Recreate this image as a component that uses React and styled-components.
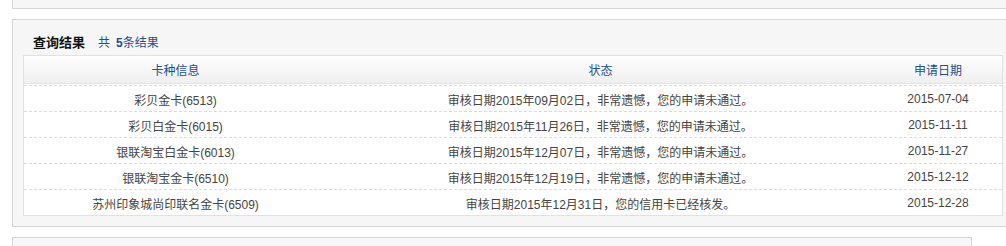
import React from "react";
import styled, { createGlobalStyle } from "styled-components";

const Global = createGlobalStyle`
  html, body { margin: 0; padding: 0; background: #fff; overflow: hidden; }
  body { font-family: "Liberation Sans", Arial, "Noto Sans CJK SC", sans-serif; font-size: 12px; color: #444; }
`;

const Page = styled.div`
  width: 1040px;
  padding-left: 12px;
  display: flex;
  flex-direction: column;
  gap: 10px;
`;

const TopPanel = styled.div`
  height: 8px;
  background: #f6f6f6;
  border-left: 1px solid #d6d6d6;
  border-bottom: 1px solid #d6d6d6;
`;

const Panel = styled.section`
  background: #f6f6f6;
  border: 1px solid #d6d6d6;
  border-right: none;
  padding: 0 0 10px 10px;
`;

const BottomPanel = styled.div`
  width: 958px;
  height: 12px;
  background: #f7f7f7;
  border: 1px solid #d6d6d6;
  border-bottom: none;
`;

const TitleBar = styled.div`
  padding: 13px 0 0 10px;
  margin-bottom: 2px;
  height: 20px;
  line-height: 20px;
  display: flex;
  align-items: center;
  gap: 13px;
`;

const Title = styled.h3`
  margin: 0;
  font-size: 13px;
  font-weight: bold;
  color: #111;
  font-family: "Liberation Sans", "Noto Sans CJK SC", sans-serif;
`;

const Count = styled.span`
  font-size: 12px;
  color: #1f4e8e;
  display: flex;
  gap: 6px;
`;

const Num = styled.b`
  font-weight: bold;
`;

const Table = styled.div`
  width: 978px;
  border: 1px solid #e2e2e2;
  background: #fff;
`;

const cols = "303px 1fr 128px";

const HeadRow = styled.div`
  display: grid;
  grid-template-columns: ${cols};
  height: 27px;
  background: linear-gradient(#ffffff, #efefef);
  border-bottom: 1px solid #e4e4e4;
  margin-bottom: 1px;
`;

const Th = styled.div`
  display: flex;
  align-items: center;
  justify-content: center;
  color: #1f4e8e;
  font-size: 12px;
`;

const Row = styled.div`
  display: grid;
  grid-template-columns: ${cols};
  height: 25px;
  border-top: 1px dashed #dcdcdc;
`;

const Td = styled.div`
  display: flex;
  align-items: center;
  justify-content: center;
  color: #444;
  font-size: 12px;
  white-space: nowrap;
  padding-top: 1px;
`;

const rows = [
  ["彩贝金卡(6513)", "审核日期2015年09月02日，非常遗憾，您的申请未通过。", "2015-07-04"],
  ["彩贝白金卡(6015)", "审核日期2015年11月26日，非常遗憾，您的申请未通过。", "2015-11-11"],
  ["银联淘宝白金卡(6013)", "审核日期2015年12月07日，非常遗憾，您的申请未通过。", "2015-11-27"],
  ["银联淘宝金卡(6510)", "审核日期2015年12月19日，非常遗憾，您的申请未通过。", "2015-12-12"],
  ["苏州印象城尚印联名金卡(6509)", "审核日期2015年12月31日，您的信用卡已经核发。", "2015-12-28"],
];

export default function App() {
  return (
    <>
      <Global />
      <Page>
        <TopPanel />
        <Panel>
          <TitleBar>
            <Title>查询结果</Title>
            <Count>
              <span>共</span>
              <span><Num>5</Num>条结果</span>
            </Count>
          </TitleBar>
          <Table>
            <HeadRow>
              <Th>卡种信息</Th>
              <Th>状态</Th>
              <Th>申请日期</Th>
            </HeadRow>
            {rows.map((r, i) => (
              <Row key={i}>
                <Td>{r[0]}</Td>
                <Td>{r[1]}</Td>
                <Td>{r[2]}</Td>
              </Row>
            ))}
          </Table>
        </Panel>
        <BottomPanel />
      </Page>
    </>
  );
}
